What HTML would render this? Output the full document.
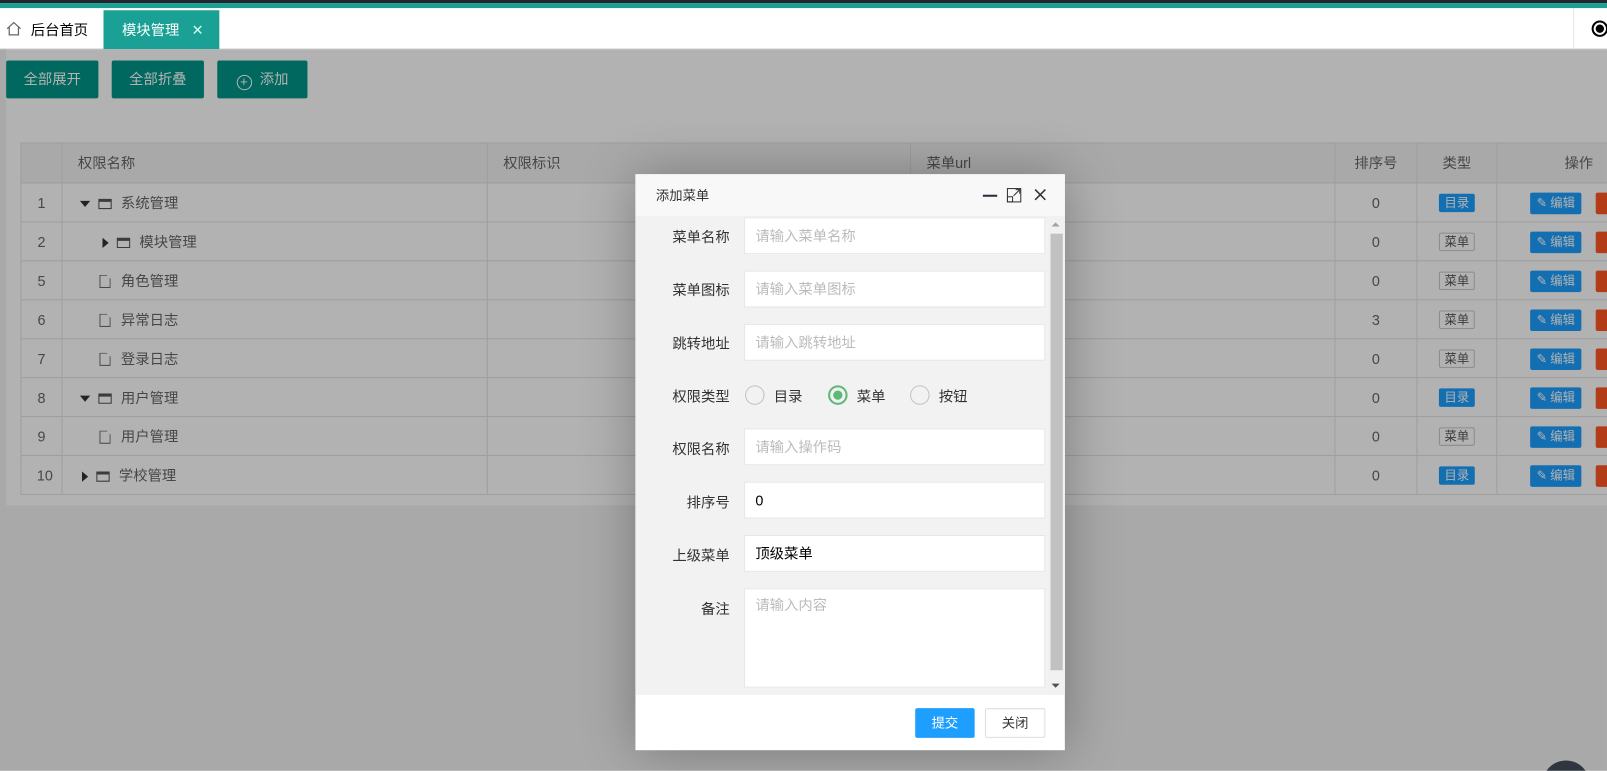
<!DOCTYPE html>
<html><head><meta charset="utf-8"><style>
*{margin:0;padding:0;box-sizing:border-box}
body{width:1607px;height:770px;overflow:hidden;background:#f2f2f2;font-family:"Liberation Sans","Noto Sans CJK SC",sans-serif;font-size:14px;color:#333;position:relative}
#w{position:absolute;left:0;top:0;width:1568px;height:752px;transform:scale(1.02487);transform-origin:0 0;overflow:hidden;background:#f2f2f2}
.abs{position:absolute}
.top1{left:0;top:0;width:1568px;height:3px;background:#23262e}
.top2{left:0;top:3px;width:1568px;height:5px;background:#1aa094}
.tabs{left:0;top:8px;width:1568px;height:40px;background:#fff;border-bottom:1px solid #e2e2e2}
.panel{left:6px;top:48px;width:1562px;height:445px;background:#fff}
.btn{top:59px;height:37px;background:#009688;color:#fff;border-radius:2px;font-size:14px;line-height:37px;text-align:center}
table{position:absolute;left:20px;top:139px;border-collapse:collapse;width:1600px;table-layout:fixed}
td,th{border:1px solid #e2e2e2;height:38px;font-weight:normal;font-size:14px;color:#666;padding:0 15px}
th{background:#f2f2f2;text-align:left;height:39px}
.c{text-align:center}
.tag{display:inline-block;height:18px;line-height:16px;padding:0 4px;font-size:12px;border-radius:2px}
.dir{background:#1e9fff;color:#fff;border:1px solid #1e9fff}
.menu{border:1px solid #c9c9c9;color:#555;background:#fff}
.ed{position:absolute;left:32px;top:9px;width:50px;height:21px;background:#1e9fff;color:#fff;font-size:12px;line-height:21px;border-radius:2px;text-align:center}
.del{position:absolute;left:96px;top:9px;width:20px;height:21px;background:#ff5722;border-radius:2px}
.tri-d{display:inline-block;width:0;height:0;border-left:5px solid transparent;border-right:5px solid transparent;border-top:6px solid #333;margin-right:8px;vertical-align:middle}
.tri-r{display:inline-block;width:0;height:0;border-top:5px solid transparent;border-bottom:5px solid transparent;border-left:6px solid #333;margin-right:8px;vertical-align:middle}
.win{display:inline-block;width:13px;height:10px;border:1px solid #555;border-top-width:3px;margin-right:9px;vertical-align:middle}
.file{display:inline-block;width:11px;height:13px;border:1px solid #666;margin-right:10px;vertical-align:middle;clip-path:polygon(0 0,65% 0,100% 30%,100% 100%,0 100%)}
.ov{left:0;top:48px;width:1568px;height:720px;background:rgba(0,0,0,0.3)}
.dlg{left:620px;top:170px;width:419px;height:562px;background:#fff;box-shadow:1px 1px 50px rgba(0,0,0,.3)}
.dt{height:42px;background:#f8f8f8;border-bottom:1px solid #eee;padding-left:20px;line-height:42px;font-size:13px;color:#333}
.body{position:absolute;left:0;top:42px;width:419px;height:466px;background:#f2f2f2;overflow:hidden}
.lab{position:absolute;width:92px;text-align:right;font-size:14px;color:#333}
.inp{position:absolute;left:106px;width:294px;height:36px;background:#fff;border:1px solid #e6e6e6;padding-left:10px;line-height:34px;font-size:14px;color:#bbb}
.radio{position:absolute;width:19px;height:19px;border:1px solid #c2c2c2;border-radius:50%}
</style></head><body><div id="w">
<div class="abs top1"></div><div class="abs top2"></div>
<div class="abs tabs">
 <svg class="abs" style="left:6px;top:13px" width="15" height="14" viewBox="0 0 15 14"><path d="M1 7L7.5 1L14 7M3 5.5V13H12V5.5" fill="none" stroke="#666" stroke-width="1.2"/></svg>
 <div class="abs" style="left:30px;top:11px;font-size:14px;color:#000">后台首页</div>
 <div class="abs" style="left:101px;top:2px;width:113px;height:38px;background:#1aa094;color:#fff;line-height:38px;padding-left:18px">模块管理 <span style="margin-left:8px;color:#cfe">✕</span></div>
 <div class="abs" style="left:1535px;top:0;width:1px;height:40px;background:#e6e6e6"></div>
 <div class="abs" style="left:1553px;top:12px;width:16px;height:16px;border:2px solid #000;border-radius:50%;background:radial-gradient(#000 45%,#fff 50%)"></div>
</div>
<div class="abs panel"></div>
<div class="abs btn" style="left:6px;width:90px">全部展开</div>
<div class="abs btn" style="left:109px;width:90px">全部折叠</div>
<div class="abs btn" style="left:212px;width:88px"><span style="display:inline-block;width:15px;height:15px;border:1px solid #fff;border-radius:50%;line-height:12px;font-size:13px;vertical-align:-2px;margin-right:8px">+</span>添加</div>
<table>
<colgroup><col style="width:40px"><col style="width:415px"><col style="width:413px"><col style="width:414px"><col style="width:80px"><col style="width:78px"><col style="width:160px"></colgroup>
<tr><th></th><th>权限名称</th><th>权限标识</th><th>菜单url</th><th class="c">排序号</th><th class="c">类型</th><th class="c">操作</th></tr>
<tr><td class="c">1</td><td><span class="tri-d" style="margin-left:2px"></span><span class="win"></span>系统管理</td><td></td><td></td><td class="c">0</td><td class="c"><span class="tag dir">目录</span></td><td style="position:relative"><span class="ed">✎ 编辑</span><span class="del"></span></td></tr>
<tr><td class="c">2</td><td><span class="tri-r" style="margin-left:24px"></span><span class="win"></span>模块管理</td><td></td><td></td><td class="c">0</td><td class="c"><span class="tag menu">菜单</span></td><td style="position:relative"><span class="ed">✎ 编辑</span><span class="del"></span></td></tr>
<tr><td class="c">5</td><td><span class="file" style="margin-left:21px"></span>角色管理</td><td></td><td></td><td class="c">0</td><td class="c"><span class="tag menu">菜单</span></td><td style="position:relative"><span class="ed">✎ 编辑</span><span class="del"></span></td></tr>
<tr><td class="c">6</td><td><span class="file" style="margin-left:21px"></span>异常日志</td><td></td><td></td><td class="c">3</td><td class="c"><span class="tag menu">菜单</span></td><td style="position:relative"><span class="ed">✎ 编辑</span><span class="del"></span></td></tr>
<tr><td class="c">7</td><td><span class="file" style="margin-left:21px"></span>登录日志</td><td></td><td></td><td class="c">0</td><td class="c"><span class="tag menu">菜单</span></td><td style="position:relative"><span class="ed">✎ 编辑</span><span class="del"></span></td></tr>
<tr><td class="c">8</td><td><span class="tri-d" style="margin-left:2px"></span><span class="win"></span>用户管理</td><td></td><td></td><td class="c">0</td><td class="c"><span class="tag dir">目录</span></td><td style="position:relative"><span class="ed">✎ 编辑</span><span class="del"></span></td></tr>
<tr><td class="c">9</td><td><span class="file" style="margin-left:21px"></span>用户管理</td><td></td><td></td><td class="c">0</td><td class="c"><span class="tag menu">菜单</span></td><td style="position:relative"><span class="ed">✎ 编辑</span><span class="del"></span></td></tr>
<tr><td class="c">10</td><td><span class="tri-r" style="margin-left:4px"></span><span class="win"></span>学校管理</td><td></td><td></td><td class="c">0</td><td class="c"><span class="tag dir">目录</span></td><td style="position:relative"><span class="ed">✎ 编辑</span><span class="del"></span></td></tr>
</table>
<div class="abs ov"></div>
<div class="abs" style="left:1505px;top:742px;width:46px;height:46px;border-radius:50%;background:#2f3640"></div>
<div class="abs dlg">
 <div class="dt">添加菜单</div>
 <div class="abs" style="left:339px;top:20px;width:14px;height:2px;background:#2e2d3c"></div>
 <svg class="abs" style="left:362px;top:13px" width="15" height="15" viewBox="0 0 15 15"><rect x="1" y="1" width="13" height="13" fill="none" stroke="#333"/><rect x="1" y="9" width="5" height="5" fill="none" stroke="#333"/><path d="M7 8L13 2M9 2H13V6" fill="none" stroke="#333"/></svg>
 <svg class="abs" style="left:389px;top:14px" width="12" height="12" viewBox="0 0 12 12"><path d="M1 1L11 11M11 1L1 11" stroke="#333" stroke-width="1.5"/></svg>
 <div class="body">
  <div class="lab" style="top:9px">菜单名称</div><div class="inp" style="top:0">请输入菜单名称</div>
  <div class="lab" style="top:61px">菜单图标</div><div class="inp" style="top:52px">请输入菜单图标</div>
  <div class="lab" style="top:113px">跳转地址</div><div class="inp" style="top:104px">请输入跳转地址</div>
  <div class="lab" style="top:165px">权限类型</div>
  <div class="radio" style="left:107px;top:164px"></div><div class="abs" style="left:135px;top:165px;color:#333">目录</div>
  <div class="radio" style="left:188px;top:164px;border:2px solid #5fb878"><div style="width:9px;height:9px;border-radius:50%;background:#5fb878;margin:3px"></div></div><div class="abs" style="left:216px;top:165px;color:#333">菜单</div>
  <div class="radio" style="left:268px;top:164px"></div><div class="abs" style="left:296px;top:165px;color:#333">按钮</div>
  <div class="lab" style="top:216px">权限名称</div><div class="inp" style="top:206px">请输入操作码</div>
  <div class="lab" style="top:268px">排序号</div><div class="inp" style="top:258px;color:#000">0</div>
  <div class="lab" style="top:320px">上级菜单</div><div class="inp" style="top:310px;color:#000">顶级菜单</div>
  <div class="lab" style="top:372px">备注</div><div class="inp" style="top:362px;height:97px;line-height:30px">请输入内容</div>
  <div class="abs" style="left:402px;top:0;width:17px;height:466px;background:#f1f1f1"></div>
  <div class="abs" style="left:405px;top:16px;width:12px;height:426px;background:#c1c1c1"></div>
  <div class="abs" style="left:406px;top:5px;width:0;height:0;border-left:4px solid transparent;border-right:4px solid transparent;border-bottom:4px solid #a3a3a3"></div>
  <div class="abs" style="left:406px;top:455px;width:0;height:0;border-left:4px solid transparent;border-right:4px solid transparent;border-top:4px solid #505050"></div>
 </div>
 <div class="abs" style="left:273px;top:521px;width:58px;height:29px;background:#1e9fff;color:#fff;line-height:29px;text-align:center;border-radius:2px;font-size:13px">提交</div>
 <div class="abs" style="left:341px;top:521px;width:59px;height:29px;background:#fff;border:1px solid #dedede;color:#333;line-height:27px;text-align:center;border-radius:2px;font-size:13px">关闭</div>
</div>
</div></body></html>
